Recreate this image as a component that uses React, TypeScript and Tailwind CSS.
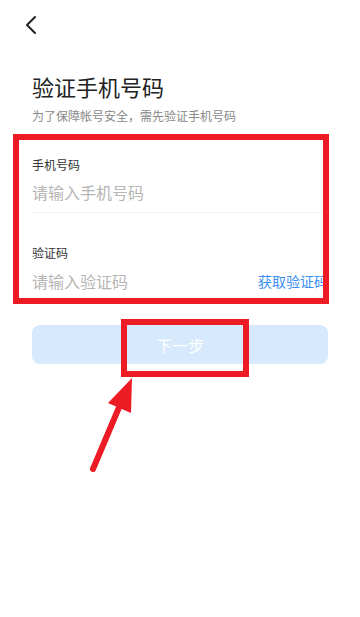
import React from "react";

export default function App() {
  return (
    <div
      className="relative w-[360px] h-[617px] overflow-hidden bg-white"
      style={{ fontFamily: '"Noto Sans CJK SC", "Noto Sans", sans-serif' }}
    >
      <div className="flex h-[50px] items-center pl-[24px]">
        <svg width="14" height="20" viewBox="0 0 14 20" fill="none">
          <path d="M11 2 L3 10 L11 18" stroke="#222" strokeWidth="2" strokeLinecap="round" strokeLinejoin="round" />
        </svg>
      </div>
      <div className="px-[32px]">
        <div className="mt-[21px] text-[22px] leading-[30px] text-[#222]">验证手机号码</div>
        <div className="mt-[7px] text-[12px] leading-[16px] text-[#888]">为了保障帐号安全，需先验证手机号码</div>

        <div className="mt-[33px] text-[12px] leading-[16px] text-[#333]">手机号码</div>
        <div className="mt-[8px] text-[16px] leading-[22px] text-[#b5b5b5]">请输入手机号码</div>
        <div className="mt-[9px] border-t border-[#f3f3f3]" />

        <div className="mt-[32px] text-[12px] leading-[16px] text-[#333]">验证码</div>
        <div className="mt-[9px] flex items-center justify-between">
          <span className="text-[16px] leading-[22px] text-[#b5b5b5]">请输入验证码</span>
          <span className="text-[14px] leading-[22px] text-[#3b8ff3]">获取验证码</span>
        </div>

        <div className="mt-[33px] flex h-[39px] items-center justify-center rounded-[8px] bg-[#d6e9fd] text-[16px] text-white">
          下一步
        </div>
      </div>

      <div className="absolute left-[13px] top-[134px] h-[170px] w-[316px] border-[6px] border-[#ed1c24]" />
      <div className="absolute left-[121px] top-[319px] h-[58px] w-[128px] border-[6px] border-[#ed1c24]" />
      <svg className="absolute left-0 top-0" width="360" height="617" viewBox="0 0 360 617">
        <line x1="93" y1="469" x2="120" y2="405" stroke="#ed1c24" strokeWidth="6" strokeLinecap="round" />
        <polygon points="132,378 108,403 131,413" fill="#ed1c24" />
      </svg>
    </div>
  );
}
